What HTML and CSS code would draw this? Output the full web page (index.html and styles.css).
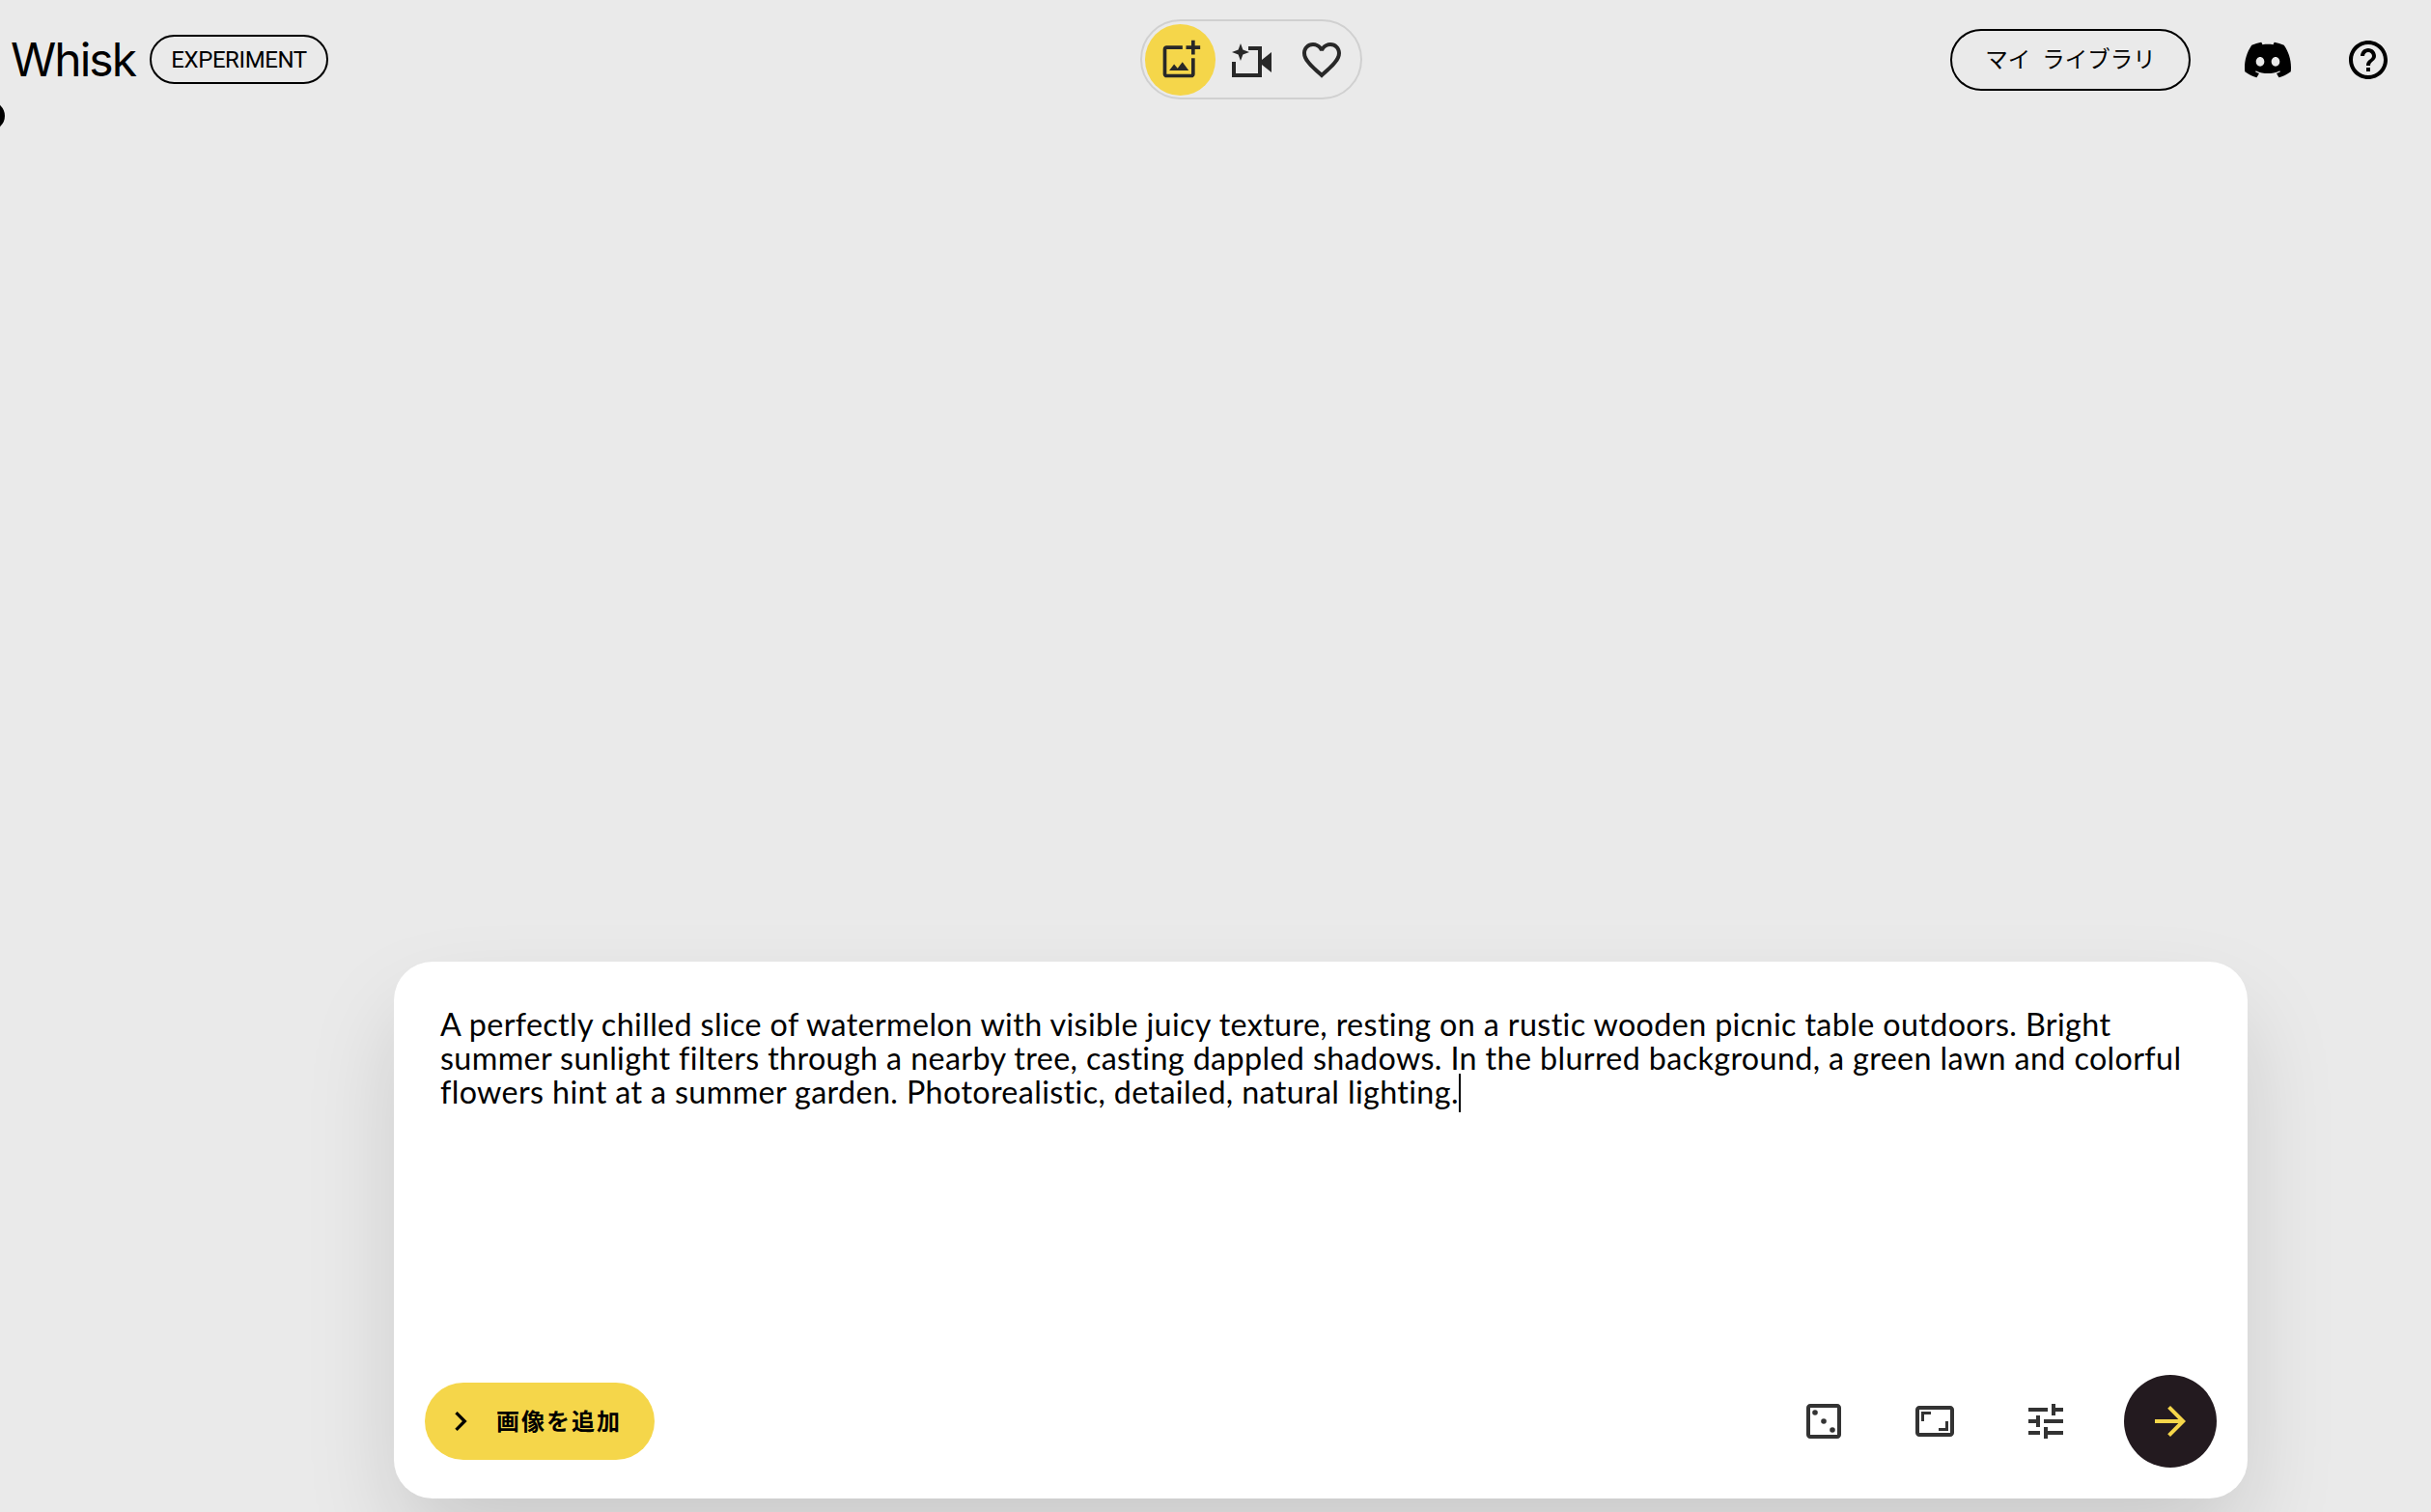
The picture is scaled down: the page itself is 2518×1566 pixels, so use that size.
FILE: index.html
```html
<!DOCTYPE html>
<html lang="ja">
<head>
<meta charset="utf-8">
<title>Whisk</title>
<link rel="stylesheet" href="styles.css">
</head>
<body>
<div class="page">
  <span class="edge-dot"></span>
  <header class="topbar">
    <div class="brand">
      <span class="logo">Whisk</span>
      <span class="badge">EXPERIMENT</span>
    </div>
    <nav class="modes">
      <button class="mode active"><svg class="ico44" viewBox="0 0 24 24"><path d="M18 20H4V6h9V4H4c-1.1 0-2 .9-2 2v14c0 1.1.9 2 2 2h14c1.1 0 2-.9 2-2v-9h-2v9zm-7.79-3.17l-1.96-2.36L5.5 18h11l-3.54-4.71zM20 4V1h-2v3h-3c.01.01 0 2 0 2h3v2.99c.01.01 2 0 2 0V6h3V4h-3z"/></svg></button>
      <button class="mode"><svg class="ico48" viewBox="0 0 48 48"><path class="stroke" d="M21 12H33V40H6V26"/><path d="M13 7l2.4 6.6L22 16l-6.6 2.4L13 25l-2.4-6.6L4 16l6.6-2.4zM35 24L45 16V37L35 29z"/></svg></button>
      <button class="mode"><svg class="ico48" viewBox="0 0 24 24"><path d="M16.5 3c-1.74 0-3.41.81-4.5 2.09C10.91 3.81 9.24 3 7.5 3 4.42 3 2 5.42 2 8.5c0 3.78 3.4 6.86 8.55 11.54L12 21.35l1.45-1.32C18.6 15.36 22 12.28 22 8.5 22 5.42 19.58 3 16.5 3zm-4.4 15.55l-.1.1-.1-.1C7.14 14.24 4 11.39 4 8.5 4 6.5 5.5 5 7.5 5c1.54 0 3.04.99 3.57 2.36h1.87C13.46 5.99 14.96 5 16.5 5c2 0 3.5 1.5 3.5 3.5 0 2.89-3.14 5.74-7.9 10.05z"/></svg></button>
    </nav>
    <div class="actions">
      <button class="library"><span class="library-label">マイ ライブラリ</span></button>
      <svg class="discord" viewBox="0 0 24 24"><path d="M20.317 4.3698a19.7913 19.7913 0 00-4.8851-1.5152.0741.0741 0 00-.0785.0371c-.211.3753-.4447.8648-.6083 1.2495-1.8447-.2762-3.68-.2762-5.4868 0-.1636-.3933-.4058-.8742-.6177-1.2495a.077.077 0 00-.0785-.037 19.7363 19.7363 0 00-4.8852 1.515.0699.0699 0 00-.0321.0277C.5334 9.0458-.319 13.5799.0992 18.0578a.0824.0824 0 00.0312.0561c2.0528 1.5076 4.0413 2.4228 5.9929 3.0294a.0777.0777 0 00.0842-.0276c.4616-.6304.8731-1.2952 1.226-1.9942a.076.076 0 00-.0416-.1057c-.6528-.2476-1.2743-.5495-1.8722-.8923a.077.077 0 01-.0076-.1277c.1258-.0943.2517-.1923.3718-.2914a.0743.0743 0 01.0776-.0105c3.9278 1.7933 8.18 1.7933 12.0614 0a.0739.0739 0 01.0785.0095c.1202.099.246.1981.3728.2924a.077.077 0 01-.0066.1276 12.2986 12.2986 0 01-1.873.8914.0766.0766 0 00-.0407.1067c.3604.698.7719 1.3628 1.225 1.9932a.076.076 0 00.0842.0286c1.961-.6067 3.9495-1.5219 6.0023-3.0294a.077.077 0 00.0313-.0552c.5004-5.177-.8382-9.6739-3.5485-13.6604a.061.061 0 00-.0312-.0286zM8.02 15.3312c-1.1825 0-2.1569-1.0857-2.1569-2.419 0-1.3332.9555-2.4189 2.157-2.4189 1.2108 0 2.1757 1.0952 2.1568 2.419 0 1.3332-.9555 2.4189-2.1569 2.4189zm7.9748 0c-1.1825 0-2.1569-1.0857-2.1569-2.419 0-1.3332.9554-2.4189 2.1569-2.4189 1.2108 0 2.1757 1.0952 2.1568 2.419 0 1.3332-.946 2.4189-2.1568 2.4189Z"/></svg>
      <svg class="ico48 help" viewBox="0 0 24 24"><path d="M11 18h2v-2h-2v2zm1-16C6.48 2 2 6.48 2 12s4.48 10 10 10 10-4.48 10-10S17.52 2 12 2zm0 18c-4.41 0-8-3.59-8-8s3.59-8 8-8 8 3.59 8 8-3.59 8-8 8zm0-14c-2.21 0-4 1.79-4 4h2c0-1.1.9-2 2-2s2 .9 2 2c0 2-3 1.75-3 5h2c0-2.25 3-2.5 3-5 0-2.21-1.79-4-4-4z"/></svg>
    </div>
  </header>
  <main class="composer">
    <section class="card">
      <p class="prompt">A perfectly chilled slice of watermelon with visible juicy texture, resting on a rustic wooden picnic table outdoors. Bright summer sunlight filters through a nearby tree, casting dappled shadows. In the blurred background, a green lawn and colorful flowers hint at a summer garden. Photorealistic, detailed, natural lighting.<span class="caret"></span></p>
      <div class="toolbar">
        <button class="add-image"><svg class="chevron" viewBox="0 0 24 24"><path d="M8.59 16.59 13.17 12 8.59 7.41 10 6l6 6-6 6z"/></svg><span class="add-label">画像を追加</span></button>
        <div class="tools">
          <svg class="ico48 tool" viewBox="0 0 24 24"><path d="M19 3H5c-1.1 0-2 .9-2 2v14c0 1.1.9 2 2 2h14c1.1 0 2-.9 2-2V5c0-1.1-.9-2-2-2zm0 16H5V5h14v14z"/><circle cx="7.5" cy="7.5" r="1.4"/><circle cx="12" cy="12" r="1.4"/><circle cx="16.5" cy="16.5" r="1.4"/></svg>
          <svg class="ico48 tool" viewBox="0 0 24 24"><path d="M20 4H4c-1.1 0-2 .9-2 2v12c0 1.1.9 2 2 2h16c1.1 0 2-.9 2-2V6c0-1.1-.9-2-2-2zm0 14H4V6h16v12z"/><path d="M19 12h-1.5v3.5H14V17h5zM5 12h1.5V8.5H10V7H5z"/></svg>
          <svg class="ico48 tool" viewBox="0 0 24 24"><path d="M3 17v2h6v-2H3zM3 5v2h10V5H3zm10 16v-2h8v-2h-8v-2h-2v6h2zM7 9v2H3v2h4v2h2V9H7zm14 4v-2H11v2h10zm-6-4h2V7h4V5h-4V3h-2v6z"/></svg>
          <button class="submit"><svg class="ico48 arrow" viewBox="0 0 24 24"><path d="M12 4l-1.41 1.41L16.17 11H4v2h12.17l-5.58 5.59L12 20l8-8z"/></svg></button>
        </div>
      </div>
    </section>
  </main>
</div>
</body>
</html>
```

FILE: styles.css
```css
* { box-sizing: border-box; }
html, body { margin: 0; height: 100%; }
body {
  background: #eaeaea;
  color: #000;
  font-family: Roboto, "Noto Sans CJK JP", sans-serif;
  overflow: hidden;
}
button { font-family: inherit; color: inherit; background: none; border: 0; padding: 0; }
.page { position: relative; height: 100vh; display: flex; flex-direction: column; padding-bottom: 14px; }
.edge-dot {
  position: absolute; left: -25px; top: 105px;
  width: 30px; height: 30px; border-radius: 50%; background: #000;
}
.topbar { display: flex; align-items: center; padding: 20px 41px 0 11px; height: 103px; }
.brand { display: flex; align-items: center; gap: 18px; width: 329px; flex: none; }
.logo { font-size: 48px; line-height: 1; font-family: Inter, sans-serif; letter-spacing: -2px; width: 126px; flex: none; }
.badge {
  border: 2px solid #000; border-radius: 26px; height: 51px; width: 185px; flex: none;
  display: flex; align-items: center; justify-content: center;
  font-size: 24px; letter-spacing: -.4px; font-family: Roboto, sans-serif;
}
.modes {
  display: flex; align-items: center; gap: 0; margin-left: 841px;
  width: 230px; height: 83px; padding: 0 3px; flex: none;
  border: 2px solid #d0d0d0; border-radius: 42px;
}
.mode { width: 74px; height: 74px; border-radius: 50%; display: flex; align-items: center; justify-content: center; color: #282828; }
.mode.active { background: #f5d64a; }
.ico48 { width: 48px; height: 48px; fill: currentColor; flex: none; display: block; }
.ico44 { width: 44px; height: 44px; fill: currentColor; flex: none; display: block; }
.stroke { fill: none; stroke: currentColor; stroke-width: 4; }
.actions { margin-left: auto; display: flex; align-items: center; }
.library {
  width: 249px; height: 64px; border: 2px solid #000; border-radius: 32px;
  font-size: 23.5px; font-weight: 400; word-spacing: 6px;
}
.library-label { display: block; padding-bottom: 4px; }
.discord { width: 48px; height: 48px; margin-left: 56px; fill: #000; }
.help { margin-left: 56px; color: #000; }
.composer { flex: 1; display: flex; align-items: flex-end; padding-left: 408px; }
.card {
  width: 1920px; height: 556px; background: #fff; border-radius: 40px;
  padding: 32px; display: flex; flex-direction: column; justify-content: space-between;
  box-shadow: 0 48px 100px -8px rgba(0,0,0,.15);
}
.prompt { margin: 15px 16px 0 16px; font-family: Lato, sans-serif; font-size: 32.3px; line-height: 35.2px; letter-spacing: .36px; }
.caret { display: inline-block; width: 2px; height: 40px; margin: -6px 0; background: #000; vertical-align: -3px; }
.toolbar { display: flex; align-items: center; justify-content: space-between; }
.add-image {
  width: 238px; height: 80px; border-radius: 40px; background: #f5d64a;
  display: flex; align-items: center; padding-left: 17px; gap: 17px;
  font-size: 24px; font-weight: 700; letter-spacing: 2px;
}
.add-label { padding-bottom: 3px; }
.chevron { width: 40px; height: 40px; fill: #000; flex: none; }
.tools { display: flex; align-items: center; gap: 67px; color: #333; }
.submit { width: 96px; height: 96px; border-radius: 50%; background: #231a1f; display: flex; align-items: center; justify-content: center; margin-left: -10px; color: #f5d64a; }
```
